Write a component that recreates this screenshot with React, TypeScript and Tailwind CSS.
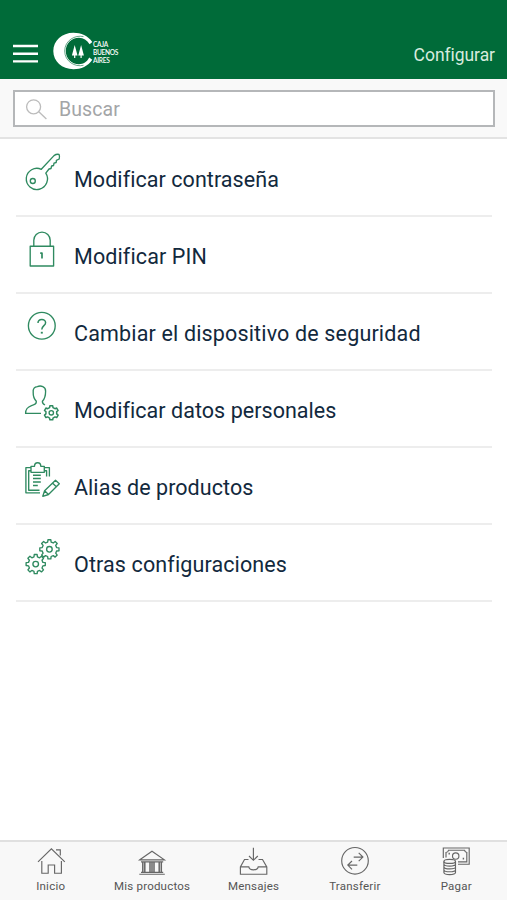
import React from "react";

function gear(cx: number, cy: number, outer: number, inner: number, teeth: number) {
  const step = (Math.PI * 2) / teeth;
  const pts: string[] = [];
  for (let i = 0; i < teeth; i++) {
    const a = i * step - Math.PI / 2;
    const corners = [
      [inner, -0.3],
      [outer, -0.19],
      [outer, 0.19],
      [inner, 0.3],
    ];
    for (const [r, f] of corners) {
      pts.push(`${(cx + r * Math.cos(a + f * step)).toFixed(2)} ${(cy + r * Math.sin(a + f * step)).toFixed(2)}`);
    }
  }
  return `M${pts.join("L")}Z`;
}

const KeyIcon = () => (
  <>
    <path d="M41.3 169.3 54 155.6Q56.5 153.8 59 154.4Q60 156.5 59.2 159L56.4 160.3 56.2 162.5 54 163.2 53.6 165.5 51.6 166 51 168.5 49 169 45.8 173.2A10.6 10.6 0 1 1 41.3 169.3Z" />
    <circle cx="32.8" cy="181" r="2.5" />
  </>
);
const LockIcon = () => (
  <>
    <path d="M30.2 246.2H53.6V266H30.2Z" />
    <path d="M33.8 246V240.3A8.2 8.2 0 0 1 50.2 240.3V246" />
    <path d="M40.2 253.2H42V258.5" strokeWidth="1.7" />
  </>
);
const HelpIcon = () => (
  <>
    <circle cx="41.8" cy="325.8" r="13.4" />
    <path d="M38 323C38 318.5 45.6 318.3 45.6 322.7C45.6 325.8 41.8 325.6 41.8 329.6" strokeWidth="1.5" />
    <path d="M41.8 331.8V333.6" strokeWidth="2" />
  </>
);
const UserIcon = () => (
  <>
    <path d="M41 413.4H25.6C25.6 408.8 27.5 407.2 31.5 405.7C35 404.5 36.6 403.8 36.3 401.3C34 398.8 33.1 395.5 33.2 392.5C32.8 388.5 34.6 386.8 37.3 386.6C40.8 385.2 45.8 386.5 45.6 391.3C45.6 395.6 44.7 399 42.4 401.3C42.2 403.3 43 404 45 405" />
    <path d={gear(51.3, 412.8, 7.2, 5.5, 6)} strokeWidth="1.5" />
    <circle cx="51.3" cy="412.8" r="2.2" />
  </>
);
const ClipboardIcon = () => (
  <>
    <path d="M31 467.6H25.9V492.8H40M31 470.7H28.7V490.2H39.5M44.5 467.6H49.4V476.5M44.5 470.7H46.6V476.5" />
    <path d="M31 472.3V466.3H34.5C34.5 461.5 40.8 461.5 40.8 466.3H44.3V472.3Z" />
    <path d="M33 475.3H40.8M33 478.6H40.8M33 482H40.8M33 485.5H37.8" strokeWidth="1.5" />
    <path d="M42.8 496.3 44.6 490.7 55.5 480.3 59.3 483.8 48.5 494.5ZM44.6 490.7 48.5 494.5M52.7 483.2 56.3 486.7" />
  </>
);
const GearsIcon = () => (
  <>
    <path d={gear(49.4, 549.3, 9.7, 7.4, 8)} />
    <circle cx="49.4" cy="549.3" r="2.8" />
    <path d={gear(35.7, 564.1, 9.7, 7.4, 8)} />
    <circle cx="35.7" cy="564.1" r="2.8" />
  </>
);

const rows = [
  { label: "Modificar contraseña", tracking: "tracking-[0.06px]", box: "20 140 44 76", icon: <KeyIcon /> },
  { label: "Modificar PIN", tracking: "tracking-[0.12px]", box: "20 217 44 76", icon: <LockIcon /> },
  { label: "Cambiar el dispositivo de seguridad", tracking: "tracking-[0.16px]", box: "20 294 44 76", icon: <HelpIcon /> },
  { label: "Modificar datos personales", tracking: "tracking-[0.04px]", box: "20 371 44 76", icon: <UserIcon /> },
  { label: "Alias de productos", tracking: "tracking-[0.06px]", box: "20 448 44 76", icon: <ClipboardIcon /> },
  { label: "Otras configuraciones", tracking: "tracking-[0.12px]", box: "20 525 44 76", icon: <GearsIcon /> },
];

const tabs = [
  {
    label: "Inicio",
    box: "35 845 32 32",
    icon: (
      <path d="M38 861.8 51.4 848.8 64.8 861.8M41.8 861V873.2H48.2V865H54.6V873.2H61.4V861M56 849.8H60.3V855.5" />
    ),
  },
  {
    label: "Mis productos",
    box: "136 845 32 32",
    icon: (
      <>
        <path d="M139.8 859.8 152 851.3 164.4 859.8ZM139.3 874.2H164.8M141 872.4H163.2M141 861.8H163.2" />
        <path d="M142.8 862V872M144.8 862V872M150 862V872M152 862V872M154 862V872M159.2 862V872M161.3 862V872" strokeWidth="1.5" />
      </>
    ),
  },
  {
    label: "Mensajes",
    box: "237 845 32 32",
    icon: (
      <path d="M253.4 847.8V860M249 856 253.4 860.3 257.8 856M248.5 859.5H244.5L240.4 867V874.2H266.8V867L262.5 859.5H258.5M240.4 866.8H248.8C249.5 870.8 257.5 870.8 258.2 866.8H266.8" />
    ),
  },
  {
    label: "Transferir",
    box: "339 845 32 32",
    icon: (
      <>
        <circle cx="355" cy="860.8" r="13.3" />
        <path d="M353.7 857.1H362.8M358.7 852.9 362.9 857.1 358.7 861.2M357.3 865.1H347.8M352 861 347.8 865.1 352 869.3" />
      </>
    ),
  },
  {
    label: "Pagar",
    box: "440 845 32 32",
    icon: (
      <>
        <path d="M443.3 858V848H469.2V864.2H458M446 857.5V852.5Q448.3 852 448.5 850.2H464.5Q464.8 852 466.8 852.5V861.8H458" />
        <circle cx="455.7" cy="856" r="3.2" />
        <path d="M448.5 853.6H449.9M462.7 858.6H464.1" strokeWidth="1.6" />
        <ellipse cx="449.7" cy="861.4" rx="5.8" ry="2" />
        <path d="M443.9 861.4V872.6C444.5 875.2 455 875.2 455.5 872.6V861.4M443.9 864.2C444.5 866.8 455 866.8 455.5 864.2M443.9 867C444.5 869.6 455 869.6 455.5 867M443.9 869.8C444.5 872.4 455 872.4 455.5 869.8" />
      </>
    ),
  },
];

function Logo() {
  return (
    <div className="flex items-center">
      <svg className="h-[40px] w-[40px] shrink-0" viewBox="53 31 40 40">
        <path
          fill="#fff"
          d="M92.3 42C88 35.8 81 32.8 73.5 32.8C62 32.8 53.3 40.8 53.3 51C53.3 61.2 62 69.2 73.5 69.2C81 69.2 88 66.2 92.3 59.7L89.2 57.6C87 62 83.5 64.2 79 64.2C71.5 64.2 65.8 58.5 65.8 51C65.8 43.5 71.5 37.8 79 37.8C83.5 37.8 87 40 89.6 44.3Z"
        />
        <path fill="none" stroke="#006b39" strokeWidth="0.6" d="M83.5 36.6C75 34.6 64.7 40.5 64.7 51C64.7 61.5 75 67.4 83.5 65.3" />
        <path fill="#fff" d="M74.7 45 77.5 55.5H75.3V58H74.1V55.5H71.9ZM81.1 45 83.9 55.5H81.7V58H80.5V55.5H78.3Z" />
      </svg>
      <div className="mt-px flex flex-col font-['Lato'] text-[6.6px] font-semibold leading-[8px] tracking-[-0.3px] text-white">
        <span>CAJA</span>
        <span>BUENOS</span>
        <span>AIRES</span>
      </div>
    </div>
  );
}

export default function App() {
  return (
    <div className="flex h-[900px] w-full flex-col overflow-hidden bg-white font-['Roboto',sans-serif]">
      <header className="flex h-[79px] shrink-0 items-start justify-between bg-[#006b39] pl-[13px] pr-[12px]">
        <div className="flex items-center pt-[31px]">
          <svg className="mr-[15px] mt-[5px] h-[20px] w-[25px]" viewBox="0 0 25 20" stroke="#fff" strokeWidth="2.4">
            <path d="M0 2H25M0 9.7H25M0 17.4H25" />
          </svg>
          <Logo />
        </div>
        <span className="mt-[43px] text-[17.5px] leading-6 tracking-[-0.05px] text-[#d8ebdf]">Configurar</span>
      </header>

      <div className="h-[60px] shrink-0 border-b-2 border-[#e3e3e3] bg-[#f9f9f9] pl-[13px] pt-[11px] pr-[12px]">
        <div className="flex h-[37px] items-center border-2 border-[#b5b7b9] bg-white pl-[9px]">
          <svg className="mr-[11px] h-6 w-6" viewBox="24 96 24 24" fill="none" stroke="#bcbcbc" strokeWidth="1.3">
            <circle cx="33.6" cy="105.8" r="7" />
            <path d="M38.8 110.8 46.4 118" />
          </svg>
          <span className="mt-[2px] text-[19.5px] leading-6 tracking-[0.1px] text-[#a3a5a7]">Buscar</span>
        </div>
      </div>

      <main className="flex flex-1 flex-col pl-[16px] pr-[15px] pt-px">
        {rows.map((row) => (
          <div key={row.label} className="flex h-[77px] shrink-0 items-center border-b-2 border-[#ededed] pl-[4px]">
            <svg className="h-[76px] w-[44px] shrink-0" viewBox={row.box} fill="none" stroke="#2f8a60" strokeWidth="1.35" strokeLinejoin="round">
              {row.icon}
            </svg>
            <span className={`ml-[10px] mt-[5px] whitespace-nowrap text-[21.5px] leading-7 text-[#12293d] ${row.tracking}`}>{row.label}</span>
          </div>
        ))}
      </main>

      <nav className="grid h-[60px] shrink-0 grid-cols-5 border-t-2 border-[#e0e0e0] bg-[#f8f8f8]">
        {tabs.map((tab) => (
          <div key={tab.label} className="flex flex-col items-center pt-[3px]">
            <svg className="h-8 w-8" viewBox={tab.box} fill="none" stroke="#666" strokeWidth="1.15">
              {tab.icon}
            </svg>
            <span className="mt-px whitespace-nowrap text-[11.5px] leading-4 tracking-[0.22px] text-[#555]">{tab.label}</span>
          </div>
        ))}
      </nav>
    </div>
  );
}
